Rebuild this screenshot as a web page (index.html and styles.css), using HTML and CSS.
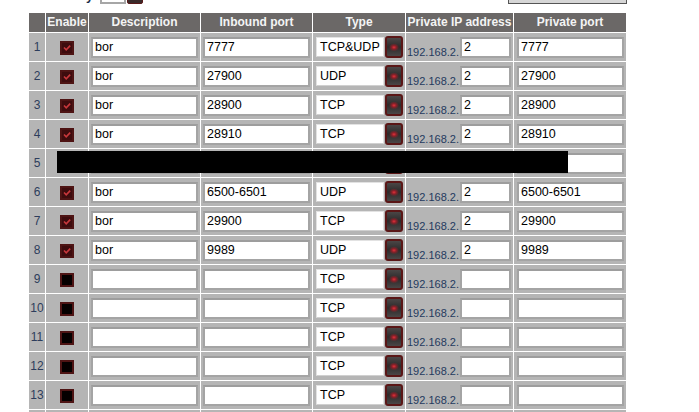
FILE: index.html
```html
<!DOCTYPE html>
<html>
<head>
<meta charset="utf-8">
<link rel="stylesheet" href="styles.css">
</head>
<body>
<div class="top">
  <span class="ue">User entry</span>
  <span class="uebox"></span>
  <span class="uebtn"></span>
  <span class="rbtn"></span>
</div>
<div class="wrap">
<table class="grid">
  <colgroup>
    <col class="c1"><col class="c2"><col class="c3"><col class="c4"><col class="c5"><col class="c6"><col class="c7">
  </colgroup>
  <thead>
    <tr><th></th><th>Enable</th><th>Description</th><th>Inbound port</th><th>Type</th><th>Private IP address</th><th>Private port</th></tr>
  </thead>
  <tbody id="rows"></tbody>
</table>
<div class="redact"></div>
</div>
<script src="app.js"></script>
</body>
</html>
```

FILE: app.js
```js
var data = [
  [1, true, "bor", "7777", "TCP&UDP", "2", "7777"],
  [2, true, "bor", "27900", "UDP", "2", "27900"],
  [3, true, "bor", "28900", "TCP", "2", "28900"],
  [4, true, "bor", "28910", "TCP", "2", "28910"],
  [5, false, "", "", "TCP", "", ""],
  [6, true, "bor", "6500-6501", "UDP", "2", "6500-6501"],
  [7, true, "bor", "29900", "TCP", "2", "29900"],
  [8, true, "bor", "9989", "UDP", "2", "9989"],
  [9, false, "", "", "TCP", "", ""],
  [10, false, "", "", "TCP", "", ""],
  [11, false, "", "", "TCP", "", ""],
  [12, false, "", "", "TCP", "", ""],
  [13, false, "", "", "TCP", "", ""],
  [14, false, "", "", "TCP", "", ""]
];
var check = '<svg width="10" height="10" viewBox="0 0 10 10"><path d="M2 4.5 L4.2 6.8 L8.2 2.6" fill="none" stroke="#c8383c" stroke-width="1.6"/></svg>';
var html = "";
data.forEach(function (r) {
  html += '<tr>' +
    '<td class="num">' + r[0] + '</td>' +
    '<td class="en"><span class="cb' + (r[1] ? ' on' : '') + '">' + (r[1] ? check : '') + '</span></td>' +
    '<td><div class="inp w107">' + r[2] + '</div></td>' +
    '<td><div class="inp w107">' + r[3] + '</div></td>' +
    '<td><div class="sel"><div class="selbox">' + r[4] + '</div><div class="selbtn"></div></div></td>' +
    '<td><div class="ip"><span class="pre">192.168.2.</span><div class="inp w51">' + r[5] + '</div></div></td>' +
    '<td><div class="inp w107 pp">' + r[6] + '</div></td>' +
    '</tr>';
});
document.getElementById("rows").innerHTML = html;
```

FILE: styles.css
```css
html, body { margin: 0; padding: 0; background: #fff; }
body { font-family: "Liberation Sans", Arial, sans-serif; overflow: hidden; }

.top {
  display: flex;
  align-items: flex-end;
  width: 627px;
  padding-left: 29px;
  box-sizing: border-box;
  height: 18px;
  margin-top: -14px;
}
.ue { font-weight: bold; font-size: 13px; line-height: 15px; color: #1c2b4a; margin-bottom: 1px; }
.uebox { width: 22px; height: 14px; margin-left: 7px; border: 2px solid #a6a6a6; background: #fff; }
.uebtn { width: 14px; height: 17px; margin-left: 1px; background: #3a2a2a; border: 1px solid #5a1a1a; border-radius: 2px; }
.rbtn { margin-left: auto; width: 117px; height: 16px; background: #d6d6d6; border: 1px solid #555; }

.wrap { position: relative; margin-left: 28px; width: 599px; margin-top: 8px; }

.grid {
  border-collapse: separate;
  border-spacing: 1px;
  background: #fff;
  table-layout: fixed;
  width: 599px;
}
.c1 { width: 16px; } .c2 { width: 42px; } .c3 { width: 111px; } .c4 { width: 111px; }
.c5 { width: 92px; } .c6 { width: 107px; } .c7 { width: 112px; }

.grid th {
  background: #6b6867;
  color: #f4f4f4;
  font-size: 12px;
  font-weight: bold;
  height: 19px;
  padding: 0;
  line-height: 19px;
  white-space: nowrap;
  overflow: hidden;
}
.grid td {
  background: #b5b5b5;
  height: 28px;
  padding: 0;
  vertical-align: middle;
}
.num { text-align: center; font-size: 12px; color: #2d3d5c; }
.en { text-align: center; }

.cb {
  display: inline-flex;
  align-items: center;
  justify-content: center;
  width: 10px;
  height: 10px;
  border: 2px solid #4e1414;
  background: #050000;
  vertical-align: middle;
  margin-top: 1px;
}
.cb.on { background: #3e0c0e; }

.inp {
  box-sizing: border-box;
  height: 21px;
  border: 2px solid #a4a4a4;
  border-top-color: #9d9d9d;
  background: #fff;
  font-size: 12.5px;
  line-height: 17px;
  padding-left: 2px;
  color: #000;
  white-space: nowrap;
  overflow: hidden;
  margin-top: 1px;
}
.w107 { width: 107px; margin-left: 2px; }
.pp { margin-left: 3px; }
.w51 { width: 51px; flex: none; }

.sel { display: flex; align-items: center; margin-left: 3px; }
.selbox {
  box-sizing: border-box;
  width: 68px;
  height: 20px;
  background: #fff;
  border: 1px solid #e2e2e2;
  border-bottom-color: #d0d0d0;
  font-size: 12.5px;
  line-height: 18px;
  padding-left: 3px;
  white-space: nowrap;
  overflow: hidden;
}
.selbtn {
  box-sizing: border-box;
  width: 18px;
  height: 22px;
  margin-left: 1px;
  border: 2px solid #5a1616;
  border-radius: 3px;
  background: radial-gradient(ellipse 5px 4px at 50% 52%, #e0303a 0, #8a2028 45%, rgba(60,40,40,0) 100%),
              linear-gradient(#4a4646, #2c2a2a 50%, #4a4646);
}

.ip { display: flex; align-items: center; }
.pre {
  font-size: 11px;
  color: #243a5e;
  margin-left: 1px;
  margin-top: 9px;
  width: 53px;
  flex: none;
  white-space: nowrap;
}

.redact {
  position: absolute;
  left: 29px;
  top: 139px;
  width: 511px;
  height: 22px;
  background: #000;
}
```
